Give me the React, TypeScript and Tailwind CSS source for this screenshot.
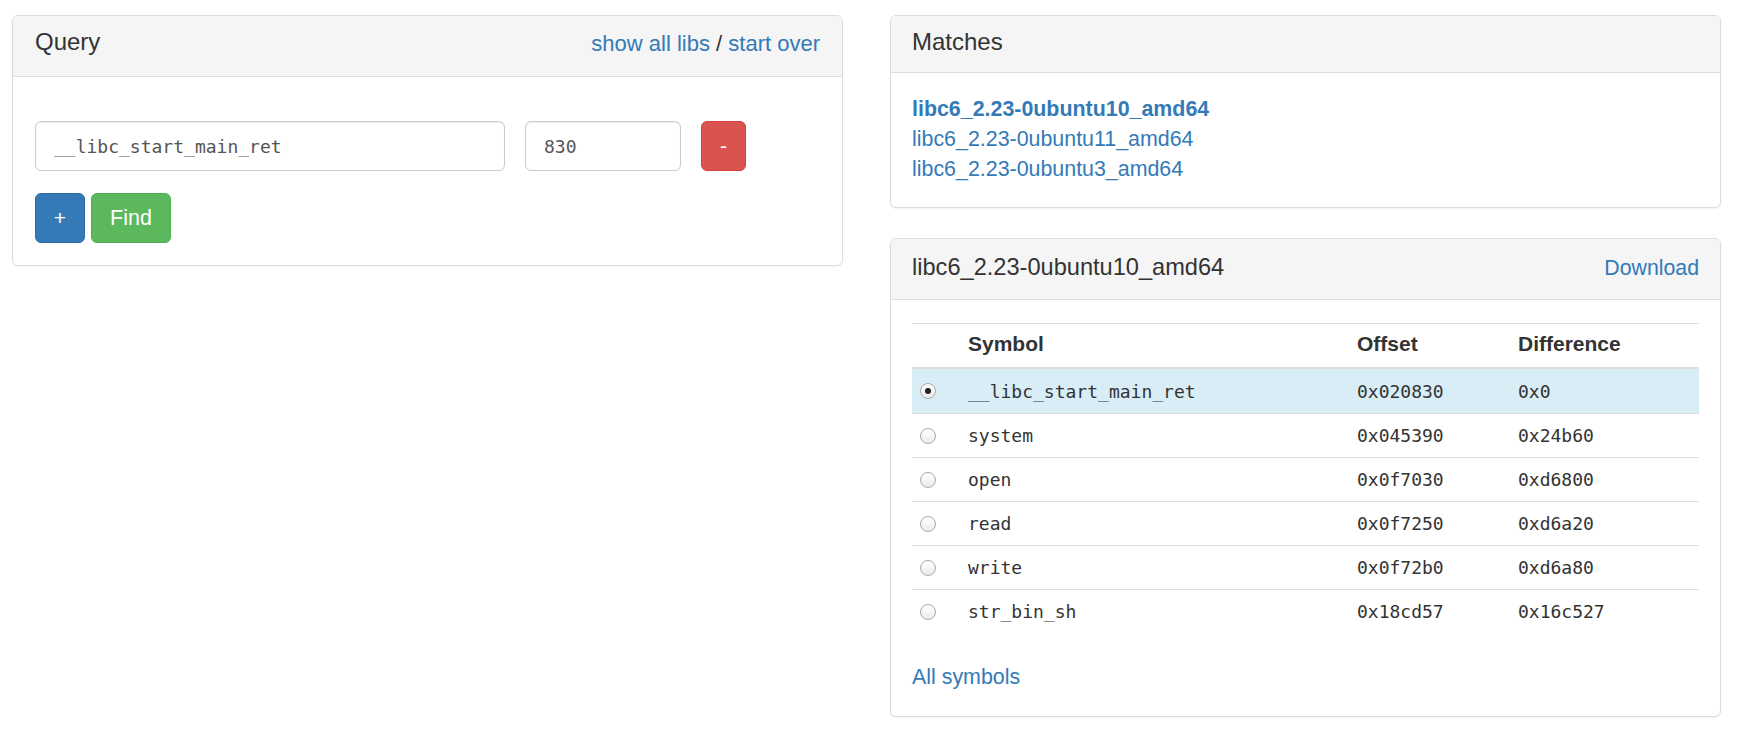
import React from "react";

const rows = [
  { sym: "__libc_start_main_ret", off: "0x020830", diff: "0x0", sel: true },
  { sym: "system", off: "0x045390", diff: "0x24b60", sel: false },
  { sym: "open", off: "0x0f7030", diff: "0xd6800", sel: false },
  { sym: "read", off: "0x0f7250", diff: "0xd6a20", sel: false },
  { sym: "write", off: "0x0f72b0", diff: "0xd6a80", sel: false },
  { sym: "str_bin_sh", off: "0x18cd57", diff: "0x16c527", sel: false },
];

function Radio({ checked }: { checked: boolean }) {
  return (
    <div className="w-[16px] h-[16px] rounded-full border border-[#a8a8a8] bg-gradient-to-b from-[#ffffff] to-[#ececec] flex items-center justify-center">
      {checked && <div className="w-[6px] h-[6px] rounded-full bg-[#222]" />}
    </div>
  );
}

export default function App() {
  return (
    <div className="min-h-[741px] bg-white font-['Liberation_Sans',Arial,sans-serif] text-[#333]">
      <div className="flex items-start gap-[47px] pl-[12px] pt-[15px]">
        {/* Left: Query panel */}
        <div className="w-[831px] border border-[#ddd] rounded-[6px] bg-white shadow-[0_1px_2px_rgba(0,0,0,0.06)]">
          <div className="h-[61px] bg-[#f5f5f5] border-b border-[#ddd] rounded-t-[5px] px-[22px] pt-[13px] flex justify-between items-start">
            <div className="text-[24px] leading-[26px] pt-[0px]">Query</div>
            <div className="text-[22px] leading-[30px]">
              <a className="text-[#337ab7]">show all libs</a>
              <span className="text-[#333]"> / </span>
              <a className="text-[#337ab7]">start over</a>
            </div>
          </div>
          <div className="px-[22px] pt-[44px] pb-[22px]">
            <div className="flex items-center h-[50px]">
              <div className="w-[470px] h-[50px] border border-[#ccc] rounded-[6px] shadow-[inset_0_1px_1px_rgba(0,0,0,0.075)] flex items-center pl-[18px] font-['DejaVu_Sans_Mono',monospace] text-[18px] text-[#555]">
                __libc_start_main_ret
              </div>
              <div className="ml-[20px] w-[156px] h-[50px] border border-[#ccc] rounded-[6px] shadow-[inset_0_1px_1px_rgba(0,0,0,0.075)] flex items-center pl-[18px] font-['DejaVu_Sans_Mono',monospace] text-[18px] text-[#555]">
                830
              </div>
              <div className="ml-[20px] w-[45px] h-[50px] rounded-[6px] bg-[#d9534f] border border-[#d43f3a] text-white text-[21px] flex items-center justify-center">
                -
              </div>
            </div>
            <div className="flex gap-[6px] mt-[22px]">
              <div className="w-[50px] h-[50px] rounded-[6px] bg-[#337ab7] border border-[#2e6da4] text-white text-[21px] flex items-center justify-center">
                +
              </div>
              <div className="w-[80px] h-[50px] rounded-[6px] bg-[#5cb85c] border border-[#4cae4c] text-white text-[21.5px] flex items-center justify-center">
                Find
              </div>
            </div>
          </div>
        </div>

        {/* Right column */}
        <div className="w-[831px] flex flex-col gap-[30px]">
          {/* Matches */}
          <div className="border border-[#ddd] rounded-[6px] bg-white shadow-[0_1px_2px_rgba(0,0,0,0.06)]">
            <div className="h-[57px] bg-[#f5f5f5] border-b border-[#ddd] rounded-t-[5px] px-[21px] pt-[13px]">
              <div className="text-[24px] leading-[26px]">Matches</div>
            </div>
            <div className="px-[21px] pt-[21px] pb-[23px] text-[21.4px] leading-[30px] text-[#337ab7]">
              <div className="font-bold">libc6_2.23-0ubuntu10_amd64</div>
              <div>libc6_2.23-0ubuntu11_amd64</div>
              <div>libc6_2.23-0ubuntu3_amd64</div>
            </div>
          </div>

          {/* Library details */}
          <div className="border border-[#ddd] rounded-[6px] bg-white shadow-[0_1px_2px_rgba(0,0,0,0.06)]">
            <div className="h-[61px] bg-[#f5f5f5] border-b border-[#ddd] rounded-t-[5px] px-[21px] pt-[14px] flex justify-between items-start">
              <div className="text-[23.6px] leading-[26px] pt-[1px]">libc6_2.23-0ubuntu10_amd64</div>
              <a className="text-[21.3px] leading-[30px] text-[#337ab7]">Download</a>
            </div>
            <div className="px-[21px] pt-[23px] pb-[24px]">
              <div className="border-t border-[#ddd]">
                <div className="h-[45px] pb-[4px] border-b-2 border-[#ddd] grid grid-cols-[44px_389px_161px_1fr] items-center text-[21px] font-bold">
                  <div />
                  <div className="pl-[12px]">Symbol</div>
                  <div className="pl-[12px]">Offset</div>
                  <div className="pl-[12px]">Difference</div>
                </div>
                {rows.map((r, i) => (
                  <div
                    key={r.sym}
                    className={
                      "h-[44px] grid grid-cols-[44px_389px_161px_1fr] items-center font-['DejaVu_Sans_Mono',monospace] text-[18px] text-[#333] " +
                      (i > 0 ? "border-t border-[#ddd] " : "") +
                      (r.sel ? "bg-[#d9edf7]" : "")
                    }
                  >
                    <div className="pl-[8px]">
                      <Radio checked={r.sel} />
                    </div>
                    <div className="pl-[12px]">{r.sym}</div>
                    <div className="pl-[12px]">{r.off}</div>
                    <div className="pl-[12px]">{r.diff}</div>
                  </div>
                ))}
              </div>
              <div className="mt-[29px] text-[21.4px] leading-[30px] text-[#337ab7]">All symbols</div>
            </div>
          </div>
        </div>
      </div>
    </div>
  );
}
